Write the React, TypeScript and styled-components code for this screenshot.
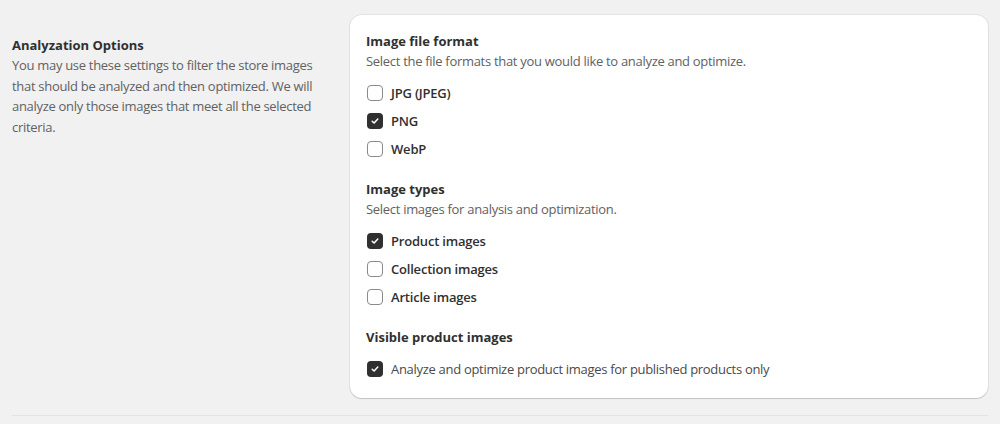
import React from "react";
import styled, { createGlobalStyle } from "styled-components";

const GlobalStyle = createGlobalStyle`
  body {
    margin: 0;
    background: #f1f1f1;
    font-family: "Open Sans", "Noto Sans", sans-serif;
    font-size: 13px;
    line-height: 20px;
    color: #303030;
  }
`;

interface Option {
  label: string;
  checked: boolean;
  bold?: boolean;
}

interface SectionItem {
  title: string;
  description?: string;
  options: Option[];
}

// The whole page: annotated section plus divider under it
const Page = styled.div`
  padding: 15px 12px 0 12px;
`;

// Left description column and the card on the right
const Layout = styled.div`
  display: grid;
  grid-template-columns: 318px 1fr;
  gap: 20px;
  padding-bottom: 17px;
  border-bottom: 1px solid #e3e3e3;
`;

const Annotation = styled.div`
  padding-top: 20px;
`;

const AnnotationTitle = styled.h2`
  margin: 0;
  font-size: 13px;
  font-weight: 700;
  line-height: 20px;
  color: #303030;
`;

const AnnotationText = styled.p`
  margin: 0;
  color: #616161;
  line-height: 20.5px;
  letter-spacing: -0.3px;
`;

const Card = styled.div`
  background: #ffffff;
  border-radius: 12px;
  padding: 16px 16px 15px 16px;
  box-shadow: 0 0 0 1px rgba(0, 0, 0, 0.06), 0 1px 1px rgba(0, 0, 0, 0.14);
  display: flex;
  flex-direction: column;
  gap: 16px;
`;

const Section = styled.div`
  display: flex;
  flex-direction: column;
`;

const SectionTitle = styled.h3`
  margin: 0;
  font-size: 13px;
  font-weight: 700;
  line-height: 20px;
  color: #303030;
`;

const SectionDescription = styled.p`
  margin: 0;
  color: #616161;
  letter-spacing: -0.3px;
`;

const OptionList = styled.div`
  margin-top: 8px;
  display: flex;
  flex-direction: column;
`;

const OptionRow = styled.label`
  display: flex;
  align-items: center;
  gap: 8px;
  height: 28px;
  padding-left: 1px;
  cursor: pointer;
`;

const Box = styled.span<{ $checked: boolean }>`
  width: 16px;
  height: 16px;
  box-sizing: border-box;
  border-radius: 4px;
  border: ${(p) => (p.$checked ? "none" : "1px solid #8a8a8a")};
  background: ${(p) => (p.$checked ? "#303030" : "#ffffff")};
  display: flex;
  align-items: center;
  justify-content: center;
  flex-shrink: 0;
`;

const OptionLabel = styled.span<{ $bold: boolean }>`
  font-weight: ${(p) => (p.$bold ? 600 : 400)};
  color: ${(p) => (p.$bold ? "#303030" : "#4a4a4a")};
  letter-spacing: ${(p) => (p.$bold ? "-0.2px" : "-0.3px")};
`;

const sections: SectionItem[] = [
  {
    title: "Image file format",
    description: "Select the file formats that you would like to analyze and optimize.",
    options: [
      { label: "JPG (JPEG)", checked: false, bold: true },
      { label: "PNG", checked: true, bold: true },
      { label: "WebP", checked: false, bold: true },
    ],
  },
  {
    title: "Image types",
    description: "Select images for analysis and optimization.",
    options: [
      { label: "Product images", checked: true, bold: true },
      { label: "Collection images", checked: false, bold: true },
      { label: "Article images", checked: false, bold: true },
    ],
  },
  {
    title: "Visible product images",
    options: [
      {
        label: "Analyze and optimize product images for published products only",
        checked: true,
      },
    ],
  },
];

const Checkbox: React.FC<{ checked: boolean }> = ({ checked }) => (
  <Box $checked={checked}>
    {checked && (
      <svg width="10" height="10" viewBox="0 0 10 10" fill="none">
        <path
          d="M2.2 5.2 L4.1 7 L7.8 3"
          stroke="#ffffff"
          strokeWidth="1.5"
          strokeLinecap="round"
          strokeLinejoin="round"
        />
      </svg>
    )}
  </Box>
);

const App: React.FC = () => {
  return (
    <>
      <GlobalStyle />
      <Page>
        <Layout>
          <Annotation>
            <AnnotationTitle>Analyzation Options</AnnotationTitle>
            <AnnotationText>
              You may use these settings to filter the store images that should be
              analyzed and then optimized. We will analyze only those images that
              meet all the selected criteria.
            </AnnotationText>
          </Annotation>
          <Card>
            {sections.map((s) => (
              <Section key={s.title}>
                <SectionTitle>{s.title}</SectionTitle>
                {s.description && <SectionDescription>{s.description}</SectionDescription>}
                <OptionList>
                  {s.options.map((o) => (
                    <OptionRow key={o.label}>
                      <Checkbox checked={o.checked} />
                      <OptionLabel $bold={!!o.bold}>{o.label}</OptionLabel>
                    </OptionRow>
                  ))}
                </OptionList>
              </Section>
            ))}
          </Card>
        </Layout>
      </Page>
    </>
  );
};

export default App;
